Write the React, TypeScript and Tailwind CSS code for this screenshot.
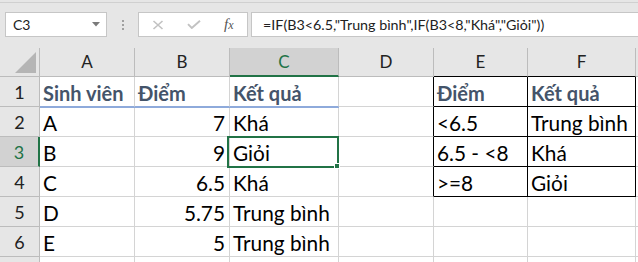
import React from 'react';

// Excel-style sheet: formula bar on top, small grade table with a lookup table beside it.

const GRID = 'border-[#d4d4d4]';

const cols = [
  { key: 'A', w: 'w-[95px]' },
  { key: 'B', w: 'w-[95px]' },
  { key: 'C', w: 'w-[109px]' },
  { key: 'D', w: 'w-[95px]' },
  { key: 'E', w: 'w-[94px]' },
  { key: 'F', w: 'w-[108px]' },
];

const rows: string[][] = [
  ['Sinh viên', 'Điểm', 'Kết quả', '', 'Điểm', 'Kết quả'],
  ['A', '7', 'Khá', '', '<6.5', 'Trung bình'],
  ['B', '9', 'Giỏi', '', '6.5 - <8', 'Khá'],
  ['C', '6.5', 'Khá', '', '>=8', 'Giỏi'],
  ['D', '5.75', 'Trung bình', '', '', ''],
  ['E', '5', 'Trung bình', '', '', ''],
];

const FORMULA = '=IF(B3<6.5,"Trung bình",IF(B3<8,"Khá","Giỏi"))';

function FormulaBar() {
  return (
    <div className="relative h-[48px] bg-[#e6e6e6]">
      <div className="absolute left-0 right-0 top-[2px] h-px bg-[#d0d0d0]" />
      <div className="flex items-start gap-0 pt-[12px] pl-[5px]">
        <div className="flex h-[25px] w-[102px] items-center justify-between border border-[#c6c6c6] bg-white pl-[7px] pr-[6px]">
          <span className="text-[14px] text-[#222]">C3</span>
          <svg width="8" height="5" viewBox="0 0 8 5">
            <polygon points="0,0 8,0 4,4.5" fill="#7a7a7a" />
          </svg>
        </div>
        <div className="flex h-[25px] w-[31px] flex-col items-center justify-center gap-[2px]">
          <span className="h-[2px] w-[2px] bg-[#a0a0a0]" />
          <span className="h-[2px] w-[2px] bg-[#a0a0a0]" />
          <span className="h-[2px] w-[2px] bg-[#a0a0a0]" />
        </div>
        <div className="flex h-[25px] w-[110px] items-center border border-[#c6c6c6] bg-white">
          <svg className="ml-[13px]" width="12" height="10" viewBox="0 0 12 10">
            <path d="M1.5 1 L10.5 9 M10.5 1 L1.5 9" stroke="#c2c2c2" strokeWidth="1.6" />
          </svg>
          <svg className="ml-[23px]" width="14" height="9" viewBox="0 0 14 9">
            <path d="M1 4.2 L4.8 8 L13 0.8" stroke="#c2c2c2" strokeWidth="1.9" fill="none" />
          </svg>
          <span className="ml-[23px] font-['Liberation_Serif',serif] text-[15px] italic leading-none text-[#555]">
            f<span className="text-[12px]">x</span>
          </span>
        </div>
        <div className="ml-[3px] flex h-[25px] flex-1 items-center border border-r-0 border-[#c6c6c6] bg-white pl-[11px]">
          <span className="whitespace-pre text-[14.3px] text-[#222]">{FORMULA}</span>
        </div>
      </div>
    </div>
  );
}

function HeaderRow() {
  return (
    <div className="flex h-[29px]">
      <div className="relative w-[40px] shrink-0 border-r border-b border-[#bcbcbc] bg-[#e6e6e6]">
        <svg className="absolute left-[15px] top-[4px]" width="22" height="22" viewBox="0 0 22 22">
          <polygon points="21,0 21,21 0,21" fill="#b5b5b5" />
        </svg>
      </div>
      {cols.map((c) => {
        const sel = c.key === 'C';
        const black = c.key === 'E' || c.key === 'F';
        return (
          <div
            key={c.key}
            className={`${c.w} flex shrink-0 items-center justify-center border-r text-[17px] ${
              sel
                ? 'border-b-2 border-r-[#bcbcbc] border-b-[#217346] bg-[#d2d2d2] text-[#217346]'
                : black
                  ? 'border-b border-r-[#bcbcbc] border-b-black bg-[#e6e6e6] text-[#222]'
                  : 'border-b border-[#bcbcbc] bg-[#e6e6e6] text-[#222]'
            }`}
          >
            {c.key}
          </div>
        );
      })}
      <div className="flex-1 border-b border-[#bcbcbc] bg-[#e6e6e6]" />
    </div>
  );
}

function Cell({ r, c, text }: { r: number; c: number; text: string }) {
  const inBox = (c === 4 || c === 5) && r <= 4;
  const rightBlack = inBox || (c === 3 && r <= 4);
  const headBlue = r === 1 && c <= 2;
  const header = r === 1 && (c <= 2 || c >= 4);
  const numeric = c === 1 && r > 1;
  const selected = r === 3 && c === 2;

  return (
    <div
      className={`${cols[c].w} relative flex shrink-0 items-end overflow-visible whitespace-nowrap border-r border-b pb-px leading-[24px] ${
        rightBlack ? 'border-r-black' : 'border-r-[#d4d4d4]'
      } ${
        inBox ? 'border-b-black' : headBlue ? 'z-10 border-b-[#8eaadb] shadow-[0_1px_0_#8eaadb]' : 'border-b-[#d4d4d4]'
      } ${numeric ? 'justify-end pr-[4px]' : 'pl-[3px]'} ${
        header ? 'text-[20px] font-bold text-[#44546a]' : 'text-[20.8px] text-black'
      }`}
    >
      {text}
      {selected && (
        <div className="absolute -left-[3px] -top-[1px] z-20 h-[32px] w-[112px] border-2 border-[#217346]">
          <div className="absolute -bottom-[3px] -right-[3px] h-[6px] w-[6px] border border-white bg-[#217346]" />
        </div>
      )}
    </div>
  );
}

function SheetRow({ r, cells }: { r: number; cells: string[] }) {
  const sel = r === 3;
  return (
    <div className="flex h-[30px]">
      <div
        className={`flex w-[40px] shrink-0 items-end justify-center border-b border-[#bcbcbc] pb-[3px] text-[18px] leading-[22px] ${
          sel ? 'border-r-2 border-r-[#217346] bg-[#d2d2d2] text-[#217346]' : 'border-r bg-[#e6e6e6] text-[#222]'
        }`}
      >
        {r}
      </div>
      {cells.map((t, c) => (
        <Cell key={c} r={r} c={c} text={t} />
      ))}
      <div className={`flex-1 border-b ${GRID}`} />
    </div>
  );
}

export default function App() {
  return (
    <div className="h-[262px] w-[638px] overflow-hidden bg-white font-['Lato',sans-serif]">
      <FormulaBar />
      <HeaderRow />
      {rows.map((cells, i) => (
        <SheetRow key={i} r={i + 1} cells={cells} />
      ))}
      <div className="flex h-[10px]">
        <div className="w-[40px] shrink-0 border-r border-[#bcbcbc] bg-[#e6e6e6]" />
        {cols.map((c) => (
          <div key={c.key} className={`${c.w} shrink-0 border-r ${GRID}`} />
        ))}
      </div>
    </div>
  );
}
